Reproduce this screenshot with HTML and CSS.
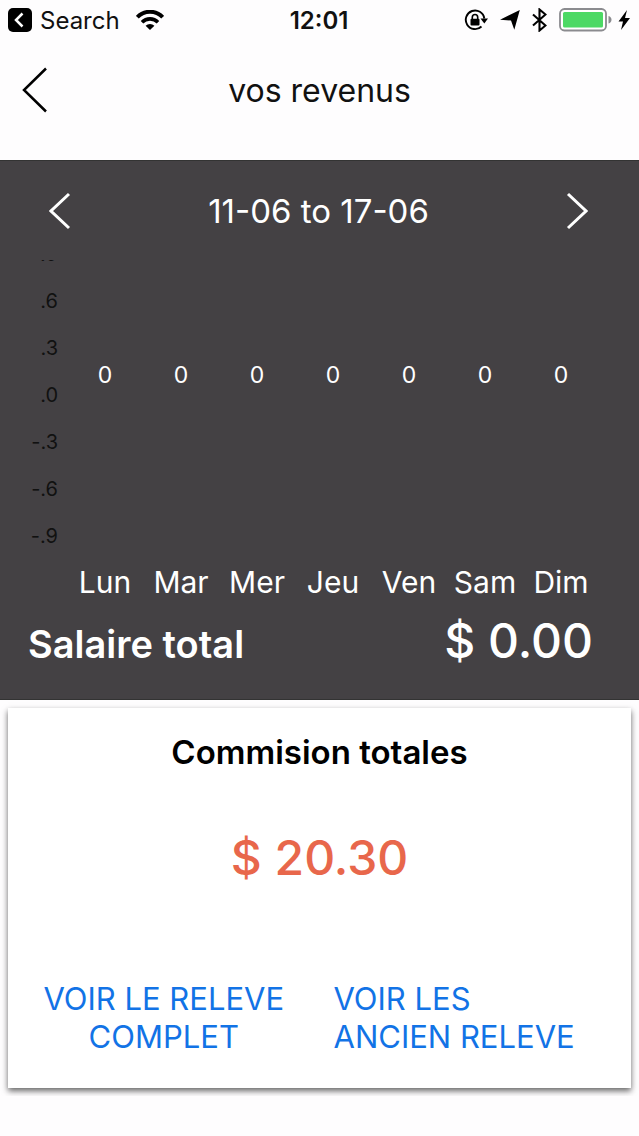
FILE: index.html
```html
<!DOCTYPE html>
<html lang="fr">
<head>
    <meta charset="UTF-8">
    <meta name="viewport" content="width=device-width, initial-scale=1.0">
    <title>vos revenus</title>
    <link rel="stylesheet" href="styles.css">
</head>
<body>

<!-- Status bar -->
<div class="status-bar">
    <div class="status-left">
        <svg width="24" height="24" viewBox="0 0 24 24">
            <rect width="24" height="24" rx="5" fill="#000"/>
            <path d="M14.500 5.500L8 12L14.500 18.500" fill="none" stroke="#fff" stroke-width="2.500"/>
        </svg>
        <a class="back-app" href="#">Search</a>
        <svg class="wifi" width="28" height="20" viewBox="0 0 28 20">
            <path d="M1.300 7.200A17.500 17.500 0 0 1 26.700 7.200" fill="none" stroke="#000" stroke-width="4"/>
            <path d="M6 12.200A11.300 11.300 0 0 1 22 12.200" fill="none" stroke="#000" stroke-width="3.600"/>
            <path d="M14 20L9.600 15.800A6.200 6.200 0 0 1 18.400 15.800Z"/>
        </svg>
    </div>
    <span class="time">12:01</span>
    <div class="status-right">
        <svg width="24" height="22" viewBox="0 0 24 22">
            <path d="M17.500 17.500A9.300 9.300 0 1 1 20.300 9.500" fill="none" stroke="#000" stroke-width="1.900"/>
            <path d="M16.500 9.500H24L20.300 14.500Z"/>
            <rect x="6.500" y="9.800" width="9" height="6.700" rx="1"/>
            <path d="M8.300 10V8.200A2.700 2.700 0 0 1 13.700 8.200V10" fill="none" stroke="#000" stroke-width="1.600"/>
        </svg>
        <svg width="20" height="20" viewBox="0 0 20 20">
            <path d="M19.800 0L14.300 19.800L11 10.600L0 9.700Z"/>
        </svg>
        <svg width="15" height="24" viewBox="0 0 15 24">
            <path d="M1 6.500L13.500 17.500L7.500 22.500V1.500L13.500 6.500L1 17.500" fill="none" stroke="#000" stroke-width="2.100"/>
        </svg>
        <svg width="53" height="24" viewBox="0 0 53 24">
            <rect x="1" y="1" width="46" height="21.500" rx="4.500" fill="#fff" stroke="#8b8b8f" stroke-width="1.800"/>
            <rect x="4" y="4" width="40" height="15.500" rx="1.500" fill="#4cd964"/>
            <path d="M49.500 8Q52.500 9 52.500 11.700T49.500 15.500Z" fill="#8b8b8f"/>
        </svg>
        <svg width="12" height="20" viewBox="0 0 12 20">
            <path d="M9 0L0.500 11.500H5L3 20L12 8H7Z"/>
        </svg>
    </div>
</div>

<!-- Page header -->
<header class="header">
    <button class="icon-btn" aria-label="Retour">
        <svg width="26" height="46" viewBox="0 0 26 46">
            <path d="M24 1.500L2 23L24 44.500" fill="none" stroke="#000" stroke-width="2.500"/>
        </svg>
    </button>
    <h1 class="title">vos revenus</h1>
</header>

<!-- Weekly earnings -->
<section class="week">
    <div class="week-nav">
        <button class="icon-btn" aria-label="Semaine précédente">
            <svg width="22" height="38" viewBox="0 0 22 38">
                <path d="M20 2L2 19L20 36" fill="none" stroke="#fff" stroke-width="3"/>
            </svg>
        </button>
        <h2 class="week-range">11-06 to 17-06</h2>
        <button class="icon-btn" aria-label="Semaine suivante">
            <svg width="22" height="38" viewBox="0 0 22 38">
                <path d="M2 2L20 19L2 36" fill="none" stroke="#fff" stroke-width="3"/>
            </svg>
        </button>
    </div>

    <div class="chart">
        <!-- The top label runs past the chart and is clipped -->
        <div class="axis">
            <span>.9</span>
            <span>.6</span>
            <span>.3</span>
            <span>.0</span>
            <span>-.3</span>
            <span>-.6</span>
            <span>-.9</span>
        </div>
        <div class="values">
            <span>0</span>
            <span>0</span>
            <span>0</span>
            <span>0</span>
            <span>0</span>
            <span>0</span>
            <span>0</span>
        </div>
    </div>
    <div class="days">
        <span>Lun</span>
        <span>Mar</span>
        <span>Mer</span>
        <span>Jeu</span>
        <span>Ven</span>
        <span>Sam</span>
        <span>Dim</span>
    </div>

    <div class="total">
        <span class="total-label">Salaire total</span>
        <span class="amount">$ 0.00</span>
    </div>
</section>

<!-- Commission card -->
<section class="card">
    <h2 class="card-title">Commision totales</h2>
    <p class="amount commission">$ 20.30</p>
    <div class="card-links">
        <a class="link-center" href="#">VOIR LE RELEVE<br>COMPLET</a>
        <a href="#">VOIR LES<br>ANCIEN RELEVE</a>
    </div>
</section>

</body>
</html>
```
FILE: styles.css
```css
:root {
    --panel-bg: #444144;
    --link-color: #1273e6;
    --accent-color: #e8674b;
    --axis-width: 67px;
}

* {
    box-sizing: border-box;
}

body {
    margin: 0;
    font-family: Inter, "Liberation Sans", sans-serif;
    background-color: #fefdfe;
    color: #111;
}

h1, h2, p {
    margin: 0;
    font-weight: 400;
}

svg {
    display: block;
}

a {
    color: inherit;
    text-decoration: none;
}

.status-bar {
    display: grid;
    grid-template-columns: 1fr auto 1fr;
    align-items: center;
    height: 40px;
    padding: 0 9px 0 8px;
}

.status-left, .status-right {
    display: flex;
    align-items: center;
    gap: 8px;
}

.status-right {
    justify-content: flex-end;
    gap: 12px;
}

.status-right svg:last-child {
    margin-left: -6px;
}

.back-app {
    font-size: 24px;
}

.wifi {
    margin-left: 8px;
}

.time {
    font-size: 24px;
    font-weight: 600;
}

.header {
    display: grid;
    grid-template-columns: 48px 1fr 48px;
    align-items: center;
    height: 120px;
    padding: 0 0 20px;
}

.icon-btn {
    display: flex;
    justify-content: center;
    padding: 0;
    background: none;
    border: none;
    cursor: pointer;
}

.header .icon-btn {
    padding-left: 22px;
}

.title {
    font-size: 32px;
    text-align: center;
}

.week {
    background-color: var(--panel-bg);
    color: #fff;
    border-top: 1px solid #333;
    border-bottom: 1px solid #333;
}

.week-nav {
    display: flex;
    align-items: center;
    justify-content: space-between;
    height: 99px;
    padding: 0 51px 0 49px;
}

.week-range {
    font-size: 33px;
}

.chart {
    display: flex;
    height: 300px;
    padding-right: 40px;
}

.axis {
    display: flex;
    flex-direction: column;
    justify-content: flex-end;
    width: var(--axis-width);
    padding-right: 9px;
    overflow: hidden;
    color: #111;
    font-size: 20px;
    line-height: 47px;
    text-align: right;
}

.values, .days {
    display: grid;
    grid-template-columns: repeat(7, 1fr);
    text-align: center;
}

.values {
    flex: 1;
    padding-top: 101px;
    font-size: 23px;
    line-height: 28px;
}

.days {
    padding: 0 40px 0 var(--axis-width);
    font-size: 30px;
    line-height: 44px;
}

.total {
    display: flex;
    align-items: baseline;
    justify-content: space-between;
    height: 95px;
    padding: 7px 46px 0 28px;
}

.total-label {
    font-size: 38px;
    font-weight: 600;
}

.amount {
    font-size: 48px;
    font-weight: 500;
    line-height: 60px;
}

.card {
    margin: 8px;
    height: 380px;
    background-color: #fff;
    box-shadow: 0 3px 6px rgba(0, 0, 0, 0.6);
    text-align: center;
}

.card-title {
    padding-top: 22px;
    color: #000;
    font-size: 33px;
    font-weight: 600;
    line-height: 44px;
}

.commission {
    margin: 54px 0 92px;
    color: var(--accent-color);
}

.card-links {
    display: grid;
    grid-template-columns: 1fr 1fr;
    color: var(--link-color);
    font-size: 31px;
    line-height: 38px;
    text-align: left;
}

.card-links a {
    padding-left: 14px;
}

.card-links .link-center {
    padding: 0;
    text-align: center;
}
```
